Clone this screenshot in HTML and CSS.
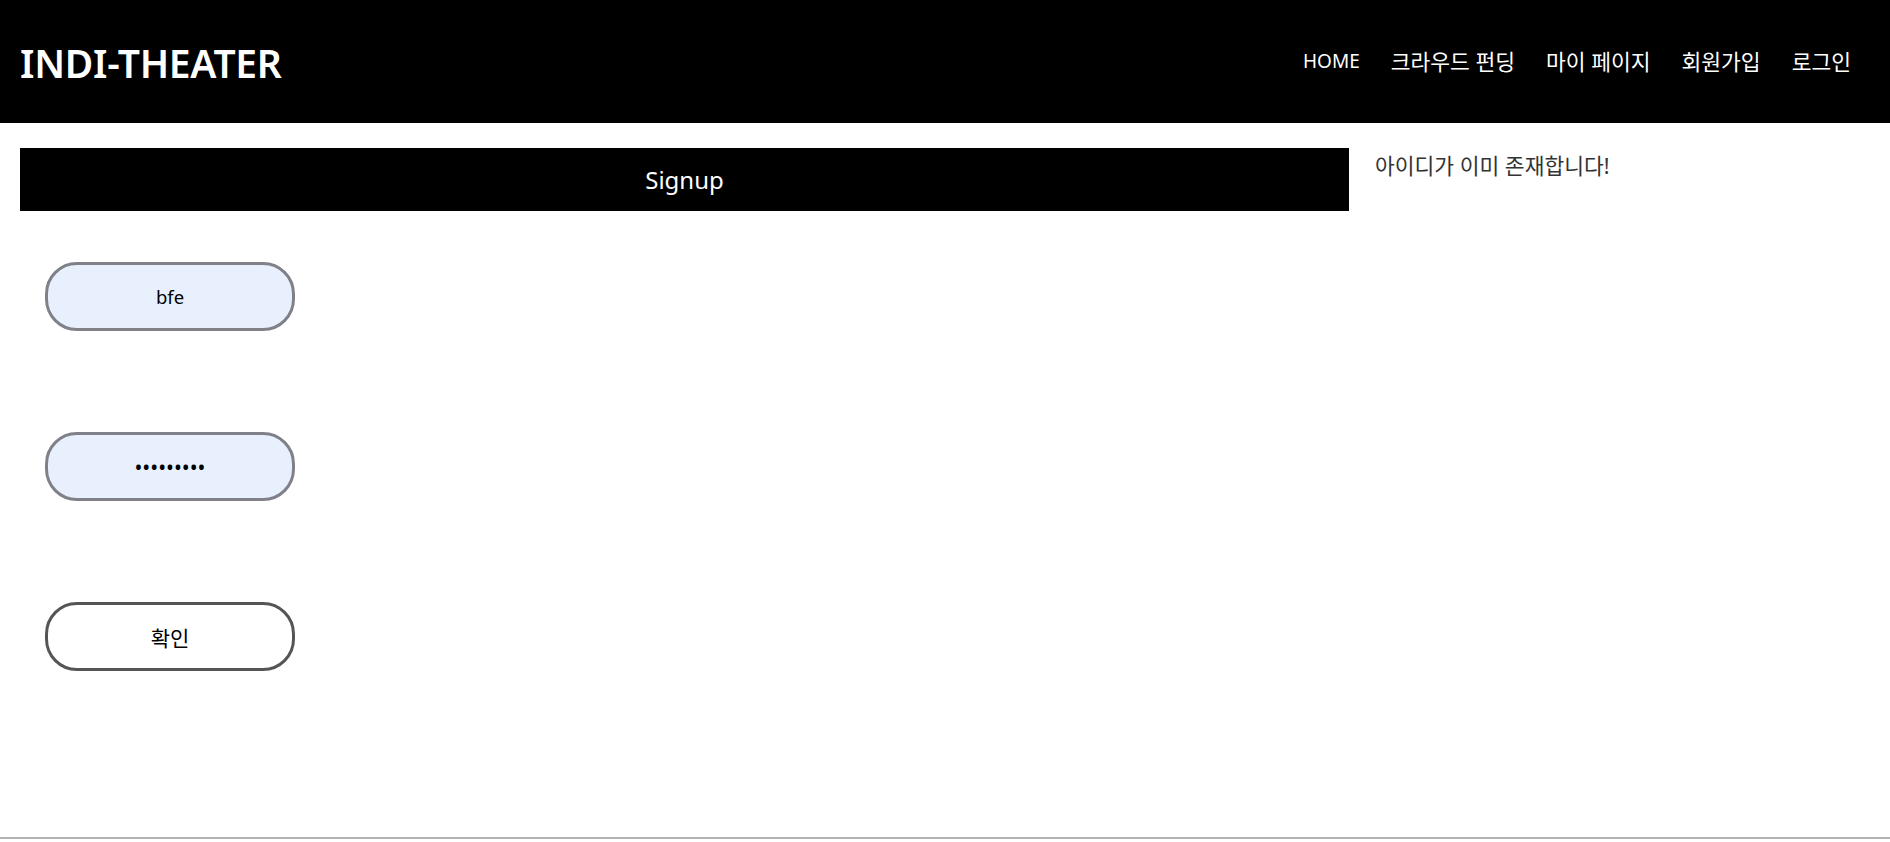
FILE: index.html
```html
<!DOCTYPE html>
<html lang="ko">
<head>
<meta charset="utf-8">
<title>INDI-THEATER</title>
<link rel="stylesheet" href="styles.css">
</head>
<body>
<div class="site">
  <header class="header">
    <div class="logo">INDI-THEATER</div>
    <nav class="nav">
      <a class="nav-latin" href="#">HOME</a>
      <a href="#">크라우드 펀딩</a>
      <a href="#">마이 페이지</a>
      <a href="#">회원가입</a>
      <a href="#">로그인</a>
    </nav>
  </header>
  <main class="main">
    <section class="signup">
      <h1 class="signup-title">Signup</h1>
      <form class="signup-form">
        <input class="field filled" type="text" value="bfe">
        <input class="field filled password" type="password" value="123456789">
        <button class="field submit" type="button">확인</button>
      </form>
    </section>
    <aside class="message">아이디가 이미 존재합니다!</aside>
  </main>
  <footer class="footer"></footer>
</div>
</body>
</html>
```
FILE: styles.css
```css
* { box-sizing: border-box; }
body {
  margin: 0;
  font-family: "Noto Sans", "Noto Sans CJK KR", sans-serif;
  background: #fff;
}
.site {
  min-height: 839px;
  display: flex;
  flex-direction: column;
}
.header {
  height: 123px;
  background: #000;
  display: flex;
  align-items: center;
  justify-content: space-between;
  padding: 0 39px 0 20px;
}
.logo {
  color: #fff;
  font-size: 39px;
  font-weight: 600;
  letter-spacing: -0.3px;
  line-height: 1;
  padding-top: 2px;
}
.nav {
  display: flex;
  align-items: center;
  gap: 31px;
}
.nav a {
  color: #fff;
  text-decoration: none;
  font-size: 21.5px;
  line-height: 1;
}
.nav a.nav-latin {
  font-size: 19px;
}
.main {
  display: grid;
  grid-template-columns: 1329px 1fr;
  column-gap: 26px;
  padding: 25px 20px 0;
}
.signup-title {
  margin: 0;
  height: 63px;
  background: #000;
  color: #fff;
  font-size: 24px;
  font-weight: 400;
  display: flex;
  align-items: center;
  justify-content: center;
}
.signup-form {
  display: flex;
  flex-direction: column;
  align-items: flex-start;
  gap: 101px;
  padding: 51px 0 0 25px;
}
.field {
  width: 250px;
  height: 69px;
  border: 3px solid #808088;
  border-radius: 32px;
  font-family: "Noto Sans", "Noto Sans CJK KR", sans-serif;
  font-size: 18.5px;
  color: #000;
  text-align: center;
  outline: none;
  padding: 0 10px;
}
.filled { background: #e8f0fe; }
.password { font-size: 21px; }
.submit {
  background: #fff;
  border-color: #555;
  font-size: 21px;
  cursor: pointer;
}
.message {
  color: #333;
  font-size: 21.5px;
  line-height: 28px;
  padding-top: 4px;
}
.footer {
  margin-top: auto;
  border-top: 2px solid #b4b4b4;
}
```
